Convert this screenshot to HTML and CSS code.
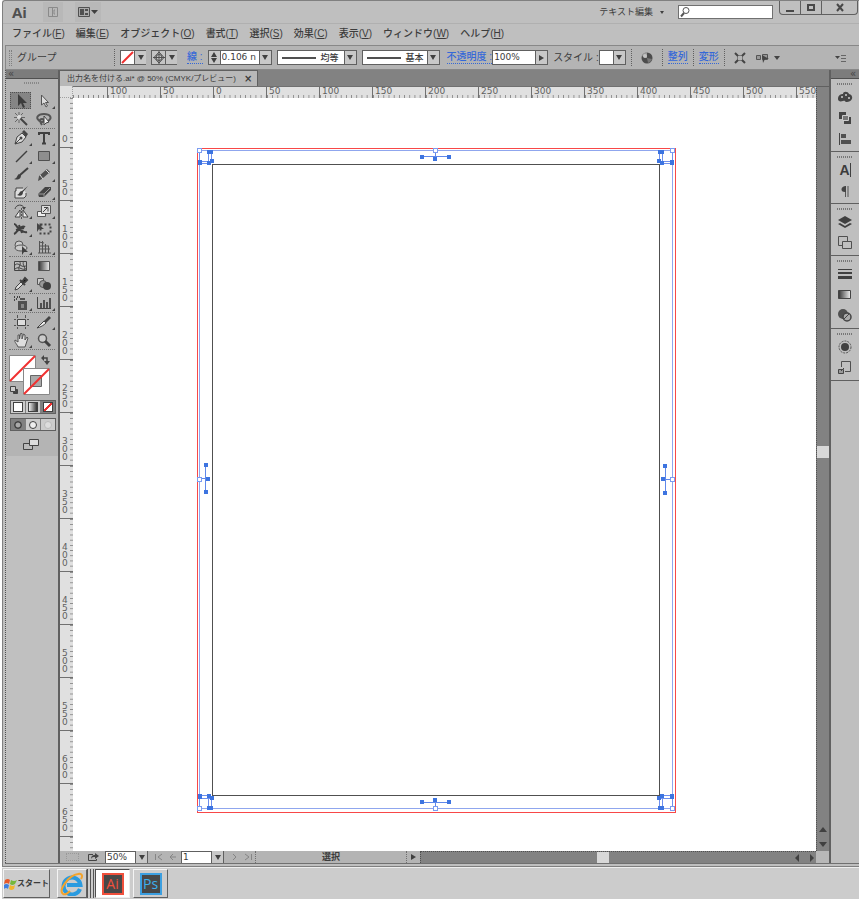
FILE: index.html
```html
<!DOCTYPE html>
<html lang="ja">
<head>
<meta charset="utf-8">
<title>出力名を付ける.ai</title>
<link rel="stylesheet" href="styles.css">
</head>
<body>
<div class="window">
  <header class="titlebar">
    <span class="logo">Ai</span>
    <button class="flat bridge" aria-label="Bridge"><svg width="12" height="12" viewBox="0 0 12 12"><path d="M1.500 1.500h9v9h-9zM5.500 1v10M8 4H7v4h1" fill="none" stroke="#8a8a8a"/></svg></button>
    <button class="flat arrange" aria-label="ドキュメントレイアウト"><svg width="22" height="12" viewBox="0 0 22 12"><path d="M1.500 1.500h11v9h-11z" fill="#aaa" stroke="#505050"/><path d="M3 3h4v6H3zM8 3h3v2H8zM8 7h3v2H8z" fill="#505050"/><path d="M14 4h7l-3.500 4z" fill="#404040"/></svg></button>
    <button class="flat workspace">テキスト編集<span class="tri small"></span></button>
    <label class="search"><svg width="12" height="12" viewBox="0 0 12 12"><circle cx="7" cy="4.500" r="3" fill="none" stroke="#555"/><path d="M5 7L2 10.500" stroke="#555" stroke-width="2"/></svg><input type="text" aria-label="検索"></label>
    <div class="winbuttons">
      <button aria-label="最小化"><svg width="10" height="10"><path d="M1 7h8v2H1z" fill="#484848"/></svg></button>
      <button aria-label="最大化"><svg width="10" height="10"><path d="M2 2h6v5H2z" fill="none" stroke="#484848" stroke-width="2"/></svg></button>
      <button class="close" aria-label="閉じる"><svg width="10" height="10"><path d="M2 1l6 7M8 1L2 8" stroke="#484848" stroke-width="2"/></svg></button>
    </div>
  </header>

  <nav class="menubar">
    <button>ファイル(<u>F</u>)</button><button>編集(<u>E</u>)</button><button>オブジェクト(<u>O</u>)</button><button>書式(<u>T</u>)</button><button>選択(<u>S</u>)</button><button>効果(<u>C</u>)</button><button>表示(<u>V</u>)</button><button>ウィンドウ(<u>W</u>)</button><button>ヘルプ(<u>H</u>)</button>
  </nav>

  <div class="controlbar">
    <span class="grip"></span>
    <span class="kind">グループ</span>
    <span class="sep"></span>
    <button class="combo swatch" aria-label="塗り"><svg width="14" height="13"><path d="M1 12L12 1" stroke="#f03030" stroke-width="2"/></svg><span class="drop"><span class="tri"></span></span></button>
    <button class="combo target" aria-label="線の色"><svg width="14" height="13"><path d="M7 0v13M1 6.500h12M7 1L12 6.500 7 12 2 6.500z" fill="none" stroke="#505050"/><circle cx="7" cy="6.500" r="3" fill="none" stroke="#505050"/></svg><span class="drop"><span class="tri"></span></span></button>
    <a class="link stroke-link" href="#stroke">線 :</a>
    <div class="combo weight"><button class="stepper" aria-label="線幅の増減"><span class="tri up"></span><span class="tri"></span></button><input type="text" value="0.106 n" aria-label="線幅"><button class="drop" aria-label="線幅一覧"><span class="tri"></span></button></div>
    <button class="combo profile"><span class="line"></span><b>均等</b><span class="drop"><span class="tri"></span></span></button>
    <button class="combo brush"><span class="line"></span><b>基本</b><span class="drop"><span class="tri"></span></span></button>
    <label class="link" for="opacity">不透明度 :</label>
    <div class="combo opacity"><input id="opacity" type="text" value="100%"><button class="drop" aria-label="不透明度スライダー"><span class="tri right"></span></button></div>
    <span class="style-label">スタイル :</span>
    <button class="combo style" aria-label="スタイル"><i></i><span class="drop"><span class="tri"></span></span></button>
    <span class="sep"></span>
    <button class="flat recolor" aria-label="オブジェクトを再配色"><svg width="12" height="12"><circle cx="6" cy="6" r="5.500" fill="#4c4c4c"/><path d="M6 6L1 4a6 6 0 0 1 5-4z" fill="#999"/><path d="M6 6l5 1a6 6 0 0 1-4 4z" fill="#777"/><circle cx="4" cy="4" r="2" fill="#c4c4c4"/></svg></button>
    <span class="sep"></span><a class="link" href="#align">整列</a><span class="sep"></span><a class="link" href="#transform">変形</a><span class="sep"></span>
    <button class="flat isolate" aria-label="選択オブジェクトを編集"><svg width="12" height="12"><path d="M3.500 3.500h5v5h-5z" fill="none" stroke="#777"/><path d="M1 1l3 3M11 1L8 4M1 11l3-3M11 11L8 8" stroke="#444" stroke-width="2"/></svg></button>
    <button class="flat similar" aria-label="共通オブジェクトを選択"><svg width="24" height="12" viewBox="0 0 24 12"><path d="M.500 3.500h4v4h-4zM6.500 2.500h5v5h-5z" fill="#999" stroke="#555"/><path d="M6 3l7 4H9l-2 4z" fill="#444"/><path d="M18 4h6l-3 4z" fill="#444"/></svg></button>
    <button class="flat panelmenu" aria-label="パネルメニュー"><svg width="12" height="10"><path d="M0 3h5L2.500 6z" fill="#444"/><path d="M6 2.500h5M6 5.500h5M6 8.500h5" stroke="#666"/></svg></button>
  </div>

  <div class="workarea">
    <aside class="tools">
      <div class="collapse">«</div>
      <div class="panelgrip"></div>
      <div class="toolgroup">
        <button class="on" aria-label="選択"><svg viewBox="0 0 16 16"><path d="M5 1v12l3-3 2 5 2-1-2-4h4z" fill="#3c3c3c"/></svg></button>
        <button class="more" aria-label="ダイレクト選択"><svg viewBox="0 0 16 16"><path d="M5.500 2v10l2.500-2 2 4 1.500-1-2-3.500h3z" fill="#ddd" stroke="#555"/></svg></button>
        <button aria-label="自動選択"><svg viewBox="0 0 16 16"><path d="M7 7l7 7" stroke="#444" stroke-width="2"/><path d="M6 1v3M6 9v3M1 6.500h3M2 2l3 3M10 2L8 4M2 11l3-3M8 6.500h4" stroke="#666"/><circle cx="6" cy="6" r="2" fill="#ddd"/></svg></button>
        <button aria-label="なげなわ"><svg viewBox="0 0 16 16"><path d="M5 11C-2 7 2 3 8 3s9 4 4 7M5 11c4 0 4-3 1-3s-2 3 0 6" fill="none" stroke="#555" stroke-width="2"/><path d="M8 5v9l2-2 3-1z" fill="#eee" stroke="#444"/></svg></button>
      </div>
      <div class="toolgroup">
        <button class="more" aria-label="ペン"><svg viewBox="0 0 16 16"><path d="M2 14L4 7l5-4 4 4-4 5zM2 14l5-5" fill="#ddd" stroke="#444"/><path d="M9 2l2-2 4 4-2 3z" fill="#444"/><circle cx="8" cy="8" r="1.500" fill="#444"/></svg></button>
        <button class="more" aria-label="文字"><svg viewBox="0 0 16 16"><path d="M3 5V3h10v2M8 3v10M6 13.500h4" fill="none" stroke="#404040" stroke-width="2"/></svg></button>
        <button class="more" aria-label="直線"><svg viewBox="0 0 16 16"><path d="M3 14L14 3" stroke="#404040" stroke-width="1.500"/></svg></button>
        <button class="more" aria-label="長方形"><svg viewBox="0 0 16 16"><path d="M2.500 3.500h11v9h-11z" fill="#8e8e8e" stroke="#505050"/></svg></button>
        <button aria-label="ブラシ"><svg viewBox="0 0 16 16"><path d="M15 2L7 9" stroke="#404040" stroke-width="2"/><path d="M8 9c0 5-4 5-7 4 3 0 3-4 5-5z" fill="#404040"/></svg></button>
        <button class="more" aria-label="鉛筆"><svg viewBox="0 0 16 16"><path d="M2 15l1-5 8-7 3 3-8 7z" fill="#505050"/><path d="M4 9l3 4M10 4l3 3" stroke="#ddd"/></svg></button>
        <button aria-label="塗りブラシ"><svg viewBox="0 0 16 16"><path d="M10 4H3v3H2v7h9l2-2V9" fill="#ddd" stroke="#444"/><path d="M15 2L9 7c-3 0-2 3-5 4 4 2 6 0 6-3z" fill="#404040"/></svg></button>
        <button class="more" aria-label="消しゴム"><svg viewBox="0 0 16 16"><path d="M2 10l7-7h6v3l-7 7H3z" fill="#444"/><path d="M2 10h6l6-6M8 10v3" stroke="#999" fill="none"/></svg></button>
      </div>
      <div class="toolgroup">
        <button class="more" aria-label="リフレクト"><svg viewBox="0 0 16 16"><path d="M8.500 5v11" stroke="#555" stroke-dasharray="2 1"/><path d="M7 7v7H2zM10 7v7h5z" fill="#eee" stroke="#444"/><path d="M2 6c1-5 8-5 9-1" fill="none" stroke="#444"/><path d="M9 4h4l-2 3z" fill="#444"/></svg></button>
        <button class="more" aria-label="拡大・縮小"><svg viewBox="0 0 16 16"><path d="M1.500 8.500h8v5h-8z" fill="#eee" stroke="#555"/><path d="M5.500 2.500h9v8h-9z" fill="#ddd" stroke="#555"/><path d="M7 9l5-5M8 4.500h4v4" fill="none" stroke="#444"/></svg></button>
        <button class="more" aria-label="線幅"><svg viewBox="0 0 16 16"><path d="M1 3c3 0 2 4 5 4s3-3 6-1M1 13c3-1 3-5 6-4s4 3 7 2M6 4l3 8M3 9l8-2" fill="none" stroke="#404040" stroke-width="2"/></svg></button>
        <button aria-label="自由変形"><svg viewBox="0 0 16 16"><path d="M4.500 3.500h10v9h-10z" fill="none" stroke="#444" stroke-width="2" stroke-dasharray="2 2"/><path d="M1 2v9l2-3h5z" fill="#444"/></svg></button>
        <button class="more" aria-label="シェイプ形成"><svg viewBox="0 0 16 16"><circle cx="6" cy="6" r="4" fill="#ccc" stroke="#555"/><ellipse cx="8" cy="9" rx="6" ry="3" fill="#ccc" stroke="#555"/><path d="M9 7v9l2-3h4z" fill="#404040"/></svg></button>
        <button class="more" aria-label="遠近グリッド"><svg viewBox="0 0 16 16"><path d="M3.500 2v12M6.500 2v12M9.500 5v9M12.500 7v7M3 3l5 1M3 7h10M3 10h11M2 14h13" fill="none" stroke="#555"/></svg></button>
      </div>
      <div class="toolgroup">
        <button aria-label="メッシュ"><svg viewBox="0 0 16 16"><path d="M1.500 3.500h12v9h-12z" fill="#bbb" stroke="#444"/><path d="M2 7c4-4 7 5 12 0M2 11c5-4 7 3 12-1M6 3c4 4-3 6 1 10M11 3c-3 4 3 6 0 10" fill="none" stroke="#444"/></svg></button>
        <button aria-label="グラデーション"><svg viewBox="0 0 16 16"><defs><linearGradient id="g"><stop stop-color="#333"/><stop offset="1" stop-color="#eee"/></linearGradient></defs><path d="M2.500 3.500h11v9h-11z" fill="url(#g)" stroke="#555"/></svg></button>
        <button class="more" aria-label="スポイト"><svg viewBox="0 0 16 16"><path d="M2 14l1-3 5-5 2 2-5 5z" fill="#ddd" stroke="#444"/><path d="M7 4l5 5M9 6l3-4 2 2-3 3z" stroke="#404040" stroke-width="2"/></svg></button>
        <button aria-label="ブレンド"><svg viewBox="0 0 16 16"><path d="M1.500 2.500h6v6h-6z" fill="#ccc" stroke="#555"/><circle cx="7" cy="8" r="3.500" fill="#999" stroke="#555"/><circle cx="11" cy="10" r="4" fill="#404040"/></svg></button>
      </div>
      <div class="toolgroup">
        <button class="more" aria-label="シンボルスプレー"><svg viewBox="0 0 16 16"><path d="M5 6h9v9H5zM7 3h5v2H7z" fill="#505050"/><path d="M8 9h3v4H8z" fill="#888"/><path d="M1 2h1M3 4h1M4 2h1M1 5h1M6 2h1" stroke="#444" stroke-width="2"/></svg></button>
        <button class="more" aria-label="棒グラフ"><svg viewBox="0 0 16 16"><path d="M1.500 2v11.500H15" fill="none" stroke="#444"/><path d="M5 8v5M8 5v8M11 7v6M14 3v10" stroke="#505050" stroke-width="2"/></svg></button>
      </div>
      <div class="toolgroup">
        <button aria-label="アートボード"><svg viewBox="0 0 16 16"><path d="M4.500 5.500h8v6h-8z" fill="#ddd" stroke="#444"/><path d="M4.500 1v3M12.500 1v3M4.500 13v2M12.500 13v2M1 5.500h2M1 11.500h2M14 5.500h2M14 11.500h2" stroke="#555"/></svg></button>
        <button class="more" aria-label="スライス"><svg viewBox="0 0 16 16"><path d="M1 14l7-7 2 2c-2 2-5 4-9 5z" fill="#eee" stroke="#444"/><path d="M8 7l5-5 2 2-5 5z" fill="#444"/></svg></button>
        <button class="more" aria-label="手のひら"><svg viewBox="0 0 16 16"><path d="M5 15C4 12 1 10 2 8l3 2V3h1.500v4L7.500 1.500H9V7l1.500-5L12 3v5l2-3 1 1-3 9z" fill="#ddd" stroke="#555"/></svg></button>
        <button aria-label="ズーム"><svg viewBox="0 0 16 16"><circle cx="6.500" cy="6.500" r="4" fill="#ccc" stroke="#555" stroke-width="1.500"/><path d="M9 9l5 5" stroke="#404040" stroke-width="3"/></svg></button>
      </div>
      <svg class="fillstroke" viewBox="0 0 42 42" role="img" aria-label="塗りと線">
        <path d="M.5 1.500h26v26H.5z" fill="#fff" stroke="#888"/><path d="M1 27L26 2" stroke="#f03030" stroke-width="2"/>
        <path d="M14.500 14.500h26v26h-26z" fill="#fff" stroke="#888"/><path d="M21.500 21.500h11v11h-11z" fill="#aaa" stroke="#666"/>
        <path d="M15 40L40 15" stroke="#f03030" stroke-width="2"/>
        <path d="M34 4h4v5" fill="none" stroke="#444" stroke-width="1.500"/><path d="M35 1v6l-3-3zM35 7h6l-3 4z" fill="#444"/>
        <path d="M4.500 35.500h4v4h-4z" fill="#444" stroke="#444"/><path d="M1.500 32.500h5v5h-5z" fill="#ccc" stroke="#444"/>
      </svg>
      <div class="modes"><button aria-label="カラー"><i class="solid"></i></button><button aria-label="グラデーション"><i class="grad"></i></button><button class="pressed" aria-label="なし"><i class="none"></i></button></div>
      <div class="modes draw"><button class="pressed" aria-label="標準描画"><i class="ball"></i></button><button aria-label="背面描画"><i class="ball light"></i></button><button aria-label="内側描画" disabled><i class="ball faint"></i></button></div>
      <button class="flat screenmode" aria-label="スクリーンモード"><svg width="17" height="13"><path d="M.5 5.500h9v6h-9z" fill="#bbb" stroke="#444"/><path d="M6.500 1.500h9v6h-9z" fill="#ddd" stroke="#444"/></svg></button>
    </aside>

    <main class="document">
      <div class="tabs"><div class="tab"><span>出力名を付ける.ai* @ 50% (CMYK/プレビュー)</span><button aria-label="タブを閉じる">×</button></div></div>
      <div class="view">
        <div class="corner"></div>
        <div class="hruler"><span class="first"></span><span>100</span><span>50</span><span>0</span><span>50</span><span>100</span><span>150</span><span>200</span><span>250</span><span>300</span><span>350</span><span>400</span><span>450</span><span>500</span><span>550</span></div>
        <div class="vruler"><span class="first">0</span><span>50</span><span>100</span><span>150</span><span>200</span><span>250</span><span>300</span><span>350</span><span>400</span><span>450</span><span>500</span><span>550</span><span>600</span><span>650</span><span></span></div>
        <div class="canvas"><svg viewBox="73 98 743 753" preserveAspectRatio="xMinYMin" role="img" aria-label="アートボード">
          <defs><g id="mark" fill="none" stroke="#6f90ee"><path d="M0 10h13M0 12.500h10M9.500 0v12M12.500 0v11M0 0v13"/><path d="M8 .500h6M.500 9v5M8 12h4M11 10h4" stroke="#3d74e0" stroke-width="4"/></g>
          <g id="arm"><path d="M-14 6.500h28M.5 0v8" stroke="#6088ea"/><path d="M-15 5h4v4h-4zM12 5h4v4h-4zM-2 7h4v4h-4z" fill="#3d74e0"/></g></defs>
          <g shape-rendering="crispEdges">
            <path d="M197.500 148.500h478v664h-478z" fill="none" stroke="#f84848"/>
            <path d="M199.500 150.500h473v658h-473z" fill="none" stroke="#8fa6ee"/>
            <path d="M212.500 164.500h447v631h-447z" fill="none" stroke="#505050"/>
            <use href="#mark" transform="translate(199 151)"/><use href="#mark" transform="translate(672 151) scale(-1 1)"/>
            <use href="#mark" transform="translate(199 808) scale(1 -1)"/><use href="#mark" transform="translate(672 808) scale(-1 -1)"/>
            <use href="#arm" transform="translate(435 150)"/><use href="#arm" transform="translate(435 809) scale(1 -1)"/>
            <use href="#arm" transform="translate(199 479) rotate(-90)"/><use href="#arm" transform="translate(672 479) rotate(90)"/>
            <path d="M197.500 148.500h4v4h-4zM670.500 148.500h4v4h-4zM197.500 806.500h4v4h-4zM670.500 806.500h4v4h-4zM433.500 148.500h4v4h-4zM433.500 806.500h4v4h-4zM197.500 477.500h4v4h-4zM670.500 477.500h4v4h-4z" fill="#fff" stroke="#7c9cf0"/>
          </g>
        </svg></div>
        <div class="vscroll"><span class="thumb"></span><span class="tri up big"></span><span class="tri big"></span></div>
      </div>
      <div class="status">
        <span class="ghost"></span>
        <svg width="12" height="10"><path d="M6 2.500H1.500v6h8V7" fill="none" stroke="#444"/><path d="M4 7c0-4 3-4 4-4V1l4 3-4 3V5C6 5 5 5 4 7z" fill="#444"/></svg>
        <div class="combo zoom"><input type="text" value="50%" aria-label="ズーム"><button class="drop" aria-label="ズーム一覧"><span class="tri"></span></button></div>
        <svg width="24" height="8"><path d="M1.500 1v6M8 1L4 4l4 3M22 4h-5M19 1l-3 3 3 3" fill="none" stroke="#858585"/></svg>
        <div class="combo page"><input type="text" value="1" aria-label="アートボード番号"><button class="drop" aria-label="アートボード一覧"><span class="tri"></span></button></div>
        <svg width="24" height="8"><path d="M4 1l3 3-3 3M16 1l4 3-4 3M22.500 1v6" fill="none" stroke="#858585"/></svg>
        <div class="current">選択</div>
        <button class="flat next" aria-label="ステータス表示"><span class="tri right"></span></button>
        <div class="hscroll"><span class="thumb"></span><span class="tri left big"></span><span class="tri right big"></span></div>
        <span class="resize"></span>
      </div>
    </main>

    <aside class="dock">
      <div class="collapse">«</div>
      <div class="dockgroup">
        <button aria-label="カラー"><svg viewBox="0 0 16 16"><path d="M1 10c0-4 3-5 5-5 0-3 5-3 6 0 5 1 4 8-2 8-3 0-1-2-4-1s-5 0-5-2z" fill="#444"/><circle cx="5" cy="8" r="1" fill="#ccc"/><circle cx="9" cy="6" r="1" fill="#ccc"/><circle cx="12" cy="9" r="1" fill="#ccc"/></svg></button>
        <button aria-label="スウォッチ"><svg viewBox="0 0 16 16"><path d="M2 2h7v7H2zM7 7h7v7H7z" fill="#444"/><path d="M5.500 5.500h6v5h-6z" fill="#777" stroke="#ccc"/></svg></button>
        <button aria-label="整列"><svg viewBox="0 0 16 16"><path d="M2.500 2v12" stroke="#444"/><path d="M4 3h5v4H4zM4 9h10v4H4z" fill="#505050"/></svg></button>
      </div>
      <div class="dockgroup">
        <button class="glyph" aria-label="文字"><span>A</span></button>
        <button aria-label="段落"><svg viewBox="0 0 16 16"><path d="M11 3v11M8.500 3v11" stroke="#555"/><path d="M9 3v6c-6 1-6-6 0-6z" fill="#444"/></svg></button>
      </div>
      <div class="dockgroup">
        <button aria-label="レイヤー"><svg viewBox="0 0 16 16"><path d="M8 2l7 4-7 4-7-4zM1 10l2-1 5 3 5-3 2 1-7 4z" fill="#404040"/></svg></button>
        <button aria-label="アートボード"><svg viewBox="0 0 16 16"><path d="M1.500 1.500h9v9h-9z" fill="none" stroke="#505050"/><path d="M5.500 6.500h9v7h-9z" fill="#c0c0c0" stroke="#505050"/></svg></button>
      </div>
      <div class="dockgroup">
        <button aria-label="線"><svg viewBox="0 0 16 16"><path d="M1 3.500h14" stroke="#404040"/><path d="M1 7h14" stroke="#404040" stroke-width="2"/><path d="M1 11.500h14" stroke="#404040" stroke-width="3"/></svg></button>
        <button aria-label="グラデーション"><svg viewBox="0 0 16 16"><path d="M1.500 3.500h12v8h-12z" fill="url(#g)" stroke="#444"/></svg></button>
        <button aria-label="透明"><svg viewBox="0 0 16 16"><circle cx="6" cy="6" r="5" fill="#505050"/><circle cx="10" cy="9" r="4" fill="#aaa" stroke="#444" stroke-width="1.500"/><path d="M7 11l5-5" stroke="#444"/></svg></button>
      </div>
      <div class="dockgroup">
        <button aria-label="アピアランス"><svg viewBox="0 0 16 16"><circle cx="8" cy="8" r="4" fill="#404040"/><circle cx="8" cy="8" r="6" fill="none" stroke="#555" stroke-dasharray="2 1"/></svg></button>
        <button aria-label="グラフィックスタイル"><svg viewBox="0 0 16 16"><path d="M4.500 7V1.500h9v10H8" fill="none" stroke="#505050"/><path d="M1.500 9.500h5v4h-5zM7 8l-3 3" fill="#999" stroke="#444"/></svg></button>
      </div>
    </aside>
  </div>
</div>

<footer class="taskbar">
  <button class="start"><svg width="13" height="12" viewBox="0 0 13 12"><path d="M1 2q3-2 5 0L5 6Q3 4 0 6z" fill="#e8592a"/><path d="M7 2q3 2 6 0l-2 4Q8 8 6 6z" fill="#76b83a"/><path d="M0 7q2-2 5 0l-1 4q-2-2-4 0z" fill="#3f7fe0"/><path d="M6 7q3 2 5 0l-1 4q-3 2-5 0z" fill="#f2b52c"/></svg>スタート</button>
  <button class="ie" aria-label="Internet Explorer"><svg width="24" height="24" viewBox="0 0 24 24"><path d="M20 17A8.500 8.500 0 1 1 20.500 13H7" fill="none" stroke="#2a9be0" stroke-width="4"/><path d="M3 22C-2 18 9 3 18 2c4-1 5 2 3 5M3 22c2 1 5-1 7-3" fill="none" stroke="#f3a32b" stroke-width="2"/></svg></button>
  <span class="stack"></span>
  <button class="app active"><span class="ai">Ai</span></button>
  <button class="app"><span class="ps">Ps</span></button>
</footer>
</body>
</html>
```
FILE: styles.css
```css
* { box-sizing: border-box; }

body {
  margin: 0;
  min-height: 100vh;
  padding: 0 0 2px 2px;
  display: flex;
  flex-direction: column;
  background: #fff;
  color: #3c3c3c;
  font: 10px/14px "Liberation Sans", "Noto Sans CJK JP", sans-serif;
}

button, input {
  font: inherit;
  color: inherit;
  margin: 0;
  padding: 0;
  border: 0;
  border-radius: 0;
  background: none;
  min-width: 0;
}

svg { display: block; flex: none; }

.window {
  flex: 1;
  display: flex;
  flex-direction: column;
  border: 1px solid #808080;
  border-width: 1px 0 1px 1px;
  border-radius: 3px 0 0 0;
  background: #bfbfbf;
  padding-bottom: 2px;
}

.flat { display: flex; align-items: center; justify-content: center; }

/* triangles */
.tri {
  width: 0;
  height: 0;
  flex: none;
  border: 3px solid transparent;
  border-top: 5px solid #404040;
  border-bottom: 0;
}
.tri.small { border-width: 3px 2px 0; }
.tri.up { border-top: 0; border-bottom: 5px solid #404040; }
.tri.right { border: 3px solid transparent; border-left: 5px solid #404040; border-right: 0; }
.tri.left { border: 3px solid transparent; border-right: 5px solid #404040; border-left: 0; }
.vscroll .tri, .hscroll .tri { border-width: 4px; }
.vscroll .tri { border-top-width: 5px; }
.vscroll .tri.up { border-top-width: 0; border-bottom-width: 5px; }

/* title bar */
.titlebar {
  height: 23px;
  display: flex;
  align-items: center;
  padding-left: 9px;
  border-bottom: 1px solid #b0b0b0;
}
.logo { width: 31px; font: bold 15px/20px "Open Sans", sans-serif; color: #505050; }
.bridge { width: 20px; height: 20px; background: #b8b8b8; }
.arrange { width: 26px; height: 20px; margin-left: 12px; background: #b8b8b8; }
.workspace { margin-left: auto; gap: 7px; padding: 0 14px 0 9px; font-size: 9px; }
.search {
  display: flex;
  align-items: center;
  width: 95px;
  height: 14px;
  border: 1px solid #707070;
  background: #fff;
}
.search input { width: 80px; height: 12px; }
.winbuttons {
  display: flex;
  align-self: flex-start;
  margin: 0 1px 0 6px;
  border: 1px solid #606060;
  border-top: 0;
  border-radius: 0 0 4px 4px;
}
.winbuttons button {
  width: 21px;
  height: 13px;
  display: flex;
  justify-content: center;
  align-items: center;
  border-right: 1px solid #606060;
}
.winbuttons .close { width: 35px; border-right: 0; }

/* menus */
.menubar { display: flex; align-items: center; gap: 11px; height: 21px; padding: 0 9px 2px; font-weight: 500; }
.menubar button { white-space: nowrap; }

/* control bar */
.controlbar {
  height: 25px;
  margin-left: 2px;
  display: flex;
  align-items: center;
  background: #b4b4b4;
  border: 1px solid #888;
  border-right: 0;
  white-space: nowrap;
}
.grip { width: 3px; height: 16px; margin: 0 5px 0 3px; border: dotted #808080; border-width: 0 1px; }
.kind { width: 92px; }
.sep { height: 17px; border-left: 1px dotted #606060; margin: 0 5px; }
.combo {
  display: flex;
  align-items: center;
  height: 15px;
  border: 1px solid #606060;
  background: #fff;
}
.drop {
  display: flex;
  align-items: center;
  justify-content: center;
  width: 12px;
  height: 13px;
  margin-left: auto;
  flex: none;
  background: #c8c8c8;
  border-left: 1px solid #606060;
}
.combo input { flex: 1; width: 20px; height: 13px; padding-left: 1px; font: 9px/13px "DejaVu Sans", sans-serif; }
.swatch, .target { width: 26px; margin-right: 5px; }
.target, .target .drop { background: #c4c4c4; }
.swatch svg, .target svg { width: 13px; }
.link { color: #3468d8; font-weight: 500; line-height: 12px; text-decoration: none; border-bottom: 1px dotted #3468d8; }
.stroke-link { margin: 0 5px 0 5px; }
.weight { width: 64px; margin-right: 5px; }
.stepper {
  width: 12px;
  height: 13px;
  flex: none;
  display: flex;
  flex-direction: column;
  align-items: center;
  gap: 1px;
  justify-content: center;
  background: #c8c8c8;
  border-right: 1px solid #606060;
}
.profile { width: 80px; margin-right: 5px; }
.brush { width: 78px; margin-right: 7px; }
.profile .line, .brush .line { width: 34px; height: 2px; margin: 0 5px 0 4px; background: #505050; }
.profile b, .brush b { font-weight: 500; font-size: 9px; }
.opacity { width: 56px; margin-right: 5px; }
.style { width: 27px; }
.recolor { width: 20px; }
.isolate { width: 20px; }
.similar { width: 24px; margin-left: 6px; }
.panelmenu { margin: 0 12px 0 auto; }

/* work area */
.workarea { flex: 1; display: flex; margin-left: 2px; border-bottom: 1px solid #707070; }
.collapse {
  height: 9px;
  background: #7c7c7c;
  border-bottom: 1px solid #505050;
  color: #444;
  font: 10px/7px "DejaVu Sans", sans-serif;
  padding-left: 2px;
}
.tools {
  width: 55px;
  flex: none;
  border-left: 1px dotted #505050;
  border-right: 2px solid #606060;
  background: linear-gradient(#b4b4b4 0 386px, #c0c0c0 386px);
}
.panelgrip {
  height: 2px;
  margin: 3px 18px 8px;
  background: repeating-linear-gradient(90deg, #888 0 1px, transparent 1px 2px);
}
.toolgroup {
  display: grid;
  grid-template-columns: 23px 23px;
  margin: 0 3px;
  border-bottom: 1px dotted #707070;
}
.toolgroup button { position: relative; height: 18px; display: flex; align-items: center; justify-content: center; }
.toolgroup svg { width: 16px; height: 16px; }
.toolgroup .on { width: 21px; height: 17px; justify-self: center; background: #858585; border: 1px dotted #505050; }
.toolgroup .more::after {
  content: "";
  position: absolute;
  right: 0;
  bottom: 1px;
  width: 3px;
  height: 3px;
  background: #444;
  clip-path: polygon(100% 0, 100% 100%, 0 100%);
}
.fillstroke { width: 42px; height: 42px; margin: 4px 0 0 3px; }
.modes { display: flex; width: 46px; margin: 4px 0 0 4px; border: 1px solid #606060; }
.modes button { flex: 1; height: 12px; display: flex; align-items: center; justify-content: center; background: #ccc; border-right: 1px solid #808080; }
.modes button:last-child { border-right: 0; }
.modes .pressed { background: #808080; }
.modes i { width: 10px; height: 10px; border: 1px solid #404040; background: #fff; }
.modes .grad { background: linear-gradient(90deg, #eee, #333); }
.modes .none { background: linear-gradient(135deg, #fff 42%, #f03030 42% 58%, #fff 58%); }
.modes .ball { width: 8px; height: 8px; border-radius: 4px; background: radial-gradient(circle at 3px 3px, #aaa 2px, #444 3px); }
.modes .ball.light { background: #eee; }
.modes .ball.faint { background: #ddd; border-color: #bbb; }
.modes.draw button { height: 11px; }
.screenmode { width: 17px; margin: 7px 0 0 17px; }

/* document */
.document { flex: 1; display: flex; flex-direction: column; min-width: 0; background: #828282; }
.tabs { height: 16px; display: flex; }
.tab {
  display: flex;
  align-items: center;
  gap: 8px;
  padding: 0 5px 0 7px;
  background: #b8b8b8;
  border: 1px solid #606060;
  border-width: 1px 1px 0 0;
  white-space: nowrap;
  font-size: 8px;
}
.tab button { font: bold 10px/12px "DejaVu Sans", sans-serif; }
.view { flex: 1; display: grid; grid-template: 12px minmax(0, 1fr) / 13px minmax(0, 1fr) 13px; }
.corner { background: #e0e0e0; border: dotted #a0a0a0; border-width: 0 1px 1px 0; }
.hruler, .vruler {
  display: flex;
  overflow: hidden;
  background: #e0e0e0;
  color: #606060;
  font: 9px/9px "DejaVu Sans", sans-serif;
}
.hruler { border-top: 1px solid #707070; }
.hruler span {
  flex: none;
  width: 53px;
  padding-left: 2px;
  border-left: 1px solid #707070;
  background: linear-gradient(90deg, #888 1px, transparent 1px) 0 100% / 10% 3px repeat-x;
}
.hruler .first { width: 34px; border-left: 0; background-size: 5px 3px; }
.vruler { flex-direction: column; grid-row: 2; contain: size; line-height: 8px; }
.vruler span {
  flex: none;
  height: 53px;
  padding: 0 4px 4px 2px;
  display: flex;
  flex-direction: column;
  justify-content: flex-end;
  word-break: break-all;
  border-bottom: 1px solid #707070;
  background: linear-gradient(#888 1px, transparent 1px) 100% 0 / 3px 10% repeat-y;
}
.vruler .first { height: 50px; }
.canvas { contain: size; overflow: hidden; background: #fff; }
.canvas svg { width: 100%; }
.vscroll {
  grid-column: 3;
  grid-row: 1 / 3;
  display: flex;
  flex-direction: column;
  align-items: center;
  gap: 10px;
  padding-bottom: 4px;
  border-left: 1px dotted #505050;
  border-top: 1px solid #606060;
}
.vscroll .thumb { width: 12px; height: 12px; margin: auto 0; background: #d8d8d8; }

.status {
  height: 12px;
  display: flex;
  align-items: center;
  overflow: hidden;
  background: #b4b4b4;
}
.ghost { width: 13px; height: 8px; margin: 0 8px 0 6px; border: 1px dotted #999; }
.status .combo { width: 43px; height: 13px; flex: none; margin-left: 6px; }
.status .zoom { margin-right: 6px; }
.status .page { margin: 0 5px 0 3px; }
.current { width: 152px; margin-left: 2px; text-align: center; font-weight: 700; font-size: 9px; border: dotted #707070; border-width: 0 1px; line-height: 12px; }
.next { width: 13px; height: 12px; }
.hscroll {
  flex: 1;
  height: 12px;
  display: flex;
  align-items: center;
  gap: 11px;
  padding-right: 2px;
  background: #828282;
  border: dotted #505050;
  border-width: 1px 0 0 1px;
}
.hscroll .thumb { width: 12px; height: 11px; margin: 0 auto; background: #d8d8d8; }
.resize { width: 13px; height: 12px; background: #b8b8b8; }

/* panel dock */
.dock { width: 30px; flex: none; border-left: 2px solid #606060; }
.dock .collapse { text-align: right; padding-right: 3px; }
.dockgroup { padding: 7px 0 2px; border-bottom: 1px solid #606060; position: relative; }
.dockgroup::before {
  content: "";
  position: absolute;
  left: 6px;
  top: 4px;
  width: 15px;
  height: 2px;
  background: repeating-linear-gradient(90deg, #777 0 1px, transparent 1px 2px);
}
.dockgroup button { width: 100%; height: 21px; display: flex; align-items: center; justify-content: center; }
.dockgroup svg { width: 16px; height: 16px; }
.glyph span { font: bold 14px/14px "Liberation Sans", sans-serif; border-right: 1px solid #404040; }

/* task bar */
.taskbar {
  height: 32px;
  display: flex;
  align-items: center;
  background: #ccc;
  border-top: 1px solid #eee;
}
.taskbar button { display: flex; align-items: center; justify-content: center; height: 29px; }
.start { width: 47px; margin: 0 7px 0 1px; font-size: 8px; font-weight: 700; }
.taskbar button { border: 1px solid #606060; border-top-color: #f4f4f4; border-left-color: #f4f4f4; }
.ie { width: 30px; }
.stack { width: 8px; height: 29px; background: repeating-linear-gradient(90deg, #555 0 1px, #ccc 1px 3px); }
.app { width: 35px; margin-right: 3px; }
.taskbar .active { background: #fff; border-color: #505050 #eee #eee #505050; }
.app span { width: 22px; height: 22px; background: #484848; font: 14px/18px "Open Sans", sans-serif; text-align: center; }
.app .ai { border: 2px solid #f0503c; color: #f0503c; }
.app .ps { border: 2px solid #3c9fe0; color: #3cb0f0; }
```
